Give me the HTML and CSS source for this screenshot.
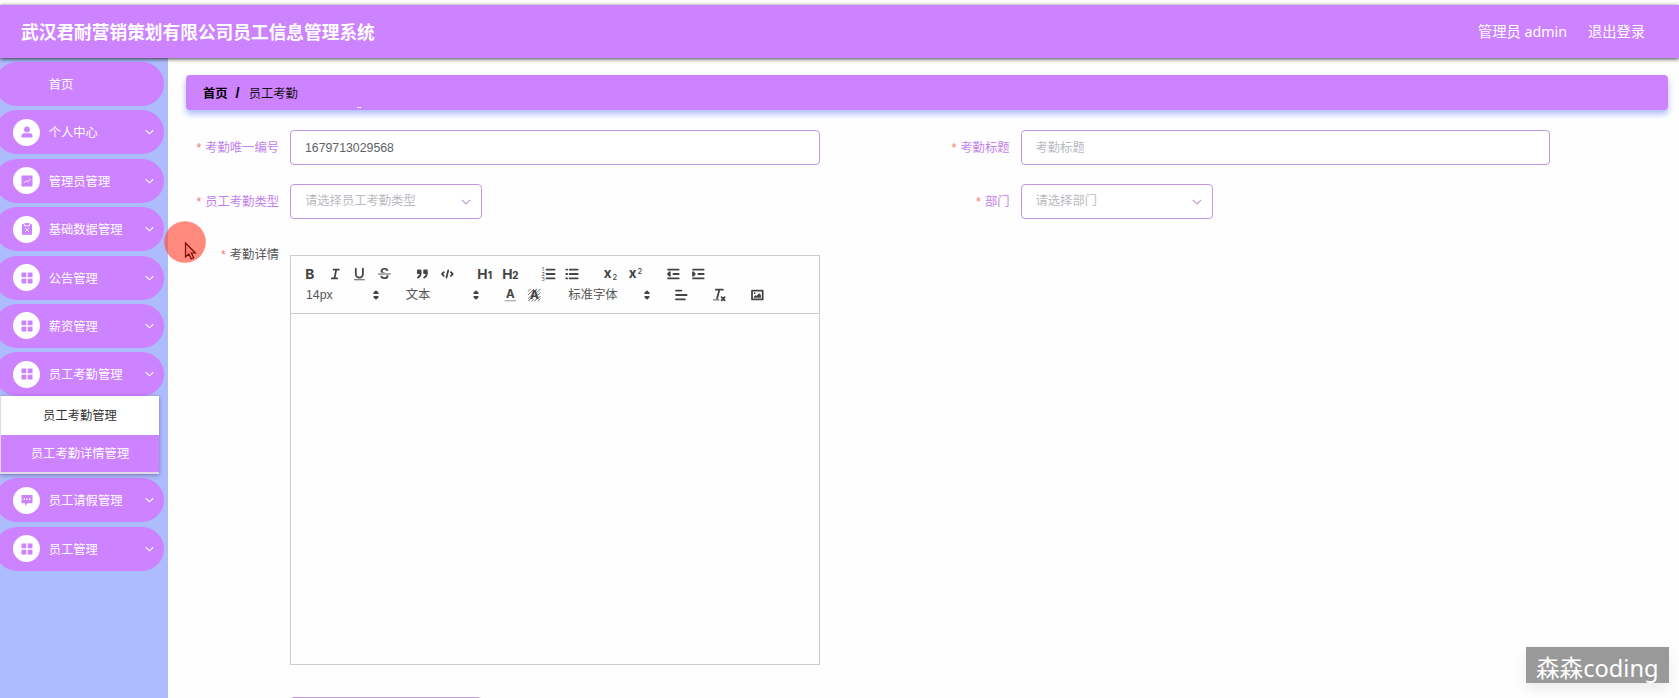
FILE: index.html
```html
<!DOCTYPE html>
<html lang="zh-CN">
<head>
<meta charset="utf-8">
<title>武汉君耐营销策划有限公司员工信息管理系统</title>
<link rel="stylesheet" href="styles.css">
</head>
<body>
<svg class="defs" width="0" height="0">
  <symbol id="chev" viewBox="0 0 10 6"><path d="M.8.8 5 5 9.200.8" fill="none" stroke="currentColor" stroke-width="1.200"/></symbol>
  <symbol id="grid" viewBox="0 0 12 12"><path d="M.5.5h4.800v4.800H.5zM6.700.5h4.800v4.800H6.700zM.5 6.700h4.800v4.800H.5zM6.700 6.700h4.800v4.800H6.700z" fill="currentColor"/></symbol>
  <symbol id="updown" viewBox="0 0 18 18"><path d="M7 11 9 13 11 11ZM7 7 9 5 11 7Z" fill="#444" stroke="#444" stroke-width="2" stroke-linejoin="round"/></symbol>
</svg>
<header class="header">
  <h1 class="title">武汉君耐营销策划有限公司员工信息管理系统</h1>
  <div class="user"><span>管理员 admin</span><span>退出登录</span></div>
</header>
<div class="body">
  <nav class="side">
    <a class="item"><span class="ico none"></span><span class="name">首页</span></a>
    <a class="item"><span class="ico"><svg viewBox="0 0 12 12"><circle cx="6" cy="3.400" r="2.900" fill="currentColor"/><path d="M.5 11.500V10Q.5 7.300 3.200 7.300h5.600Q11.500 7.300 11.500 10v1.500z" fill="currentColor"/></svg></span><span class="name">个人中心</span><svg class="chev"><use href="#chev"/></svg></a>
    <a class="item"><span class="ico"><svg viewBox="0 0 12 12"><path d="M.5.5h11v11H.5z" fill="currentColor"/><path d="M2.700 8 5 5.700 6.500 7 9.300 4" fill="none" stroke="#fff" stroke-width=".9"/></svg></span><span class="name">管理员管理</span><svg class="chev"><use href="#chev"/></svg></a>
    <a class="item"><span class="ico"><svg viewBox="0 0 12 12"><path d="M1 1.200h10v10.600H1z" fill="currentColor"/><path d="M3.500 0h5v2.600h-5z" fill="currentColor"/><path d="M3.500 1.200v1.700h5V1.200M4 5l4 4M8 5 4 9" fill="none" stroke="#fff" stroke-width=".9"/></svg></span><span class="name">基础数据管理</span><svg class="chev"><use href="#chev"/></svg></a>
    <a class="item"><span class="ico"><svg><use href="#grid"/></svg></span><span class="name">公告管理</span><svg class="chev"><use href="#chev"/></svg></a>
    <a class="item"><span class="ico"><svg><use href="#grid"/></svg></span><span class="name">薪资管理</span><svg class="chev"><use href="#chev"/></svg></a>
    <a class="item"><span class="ico"><svg><use href="#grid"/></svg></span><span class="name">员工考勤管理</span><svg class="chev"><use href="#chev"/></svg></a>
    <div class="sub"><a class="on">员工考勤管理</a><a>员工考勤详情管理</a></div>
    <a class="item"><span class="ico"><svg viewBox="0 0 12 12"><path d="M.5 1h11v8.300H6.500L4 11.700V9.300H.5z" fill="currentColor"/><path d="M2.600 4.500h1.400v1.400H2.600zM5.300 4.500h1.400v1.400H5.300zM8 4.500h1.400v1.400H8z" fill="#fff"/></svg></span><span class="name">员工请假管理</span><svg class="chev"><use href="#chev"/></svg></a>
    <a class="item"><span class="ico"><svg><use href="#grid"/></svg></span><span class="name">员工管理</span><svg class="chev"><use href="#chev"/></svg></a>
  </nav>
  <main class="main">
    <div class="crumb"><b>首页</b><b class="slash">/</b><span>员工考勤</span><i class="dash"></i></div>
    <form class="form">
      <div class="field"><label class="label">考勤唯一编号</label><div class="input value">1679713029568</div></div>
      <div class="field"><label class="label">考勤标题</label><div class="input">考勤标题</div></div>
      <div class="field"><label class="label">员工考勤类型</label><div class="input select">请选择员工考勤类型<svg class="arrow"><use href="#chev"/></svg></div></div>
      <div class="field"><label class="label">部门</label><div class="input select">请选择部门<svg class="arrow"><use href="#chev"/></svg></div></div>
      <div class="field wide"><label class="label dark">考勤详情</label>
        <div class="editor">
          <div class="toolbar">
            <div class="row">
              <div class="group">
                <svg class="btn" viewBox="0 0 18 18"><text x="3.400" y="14.600" font-size="15.500" font-weight="700">B</text></svg>
                <svg class="btn" viewBox="0 0 18 18"><g class="st"><path d="M7 4h6M5 14h6M8 14l2-10"/></g></svg>
                <svg class="btn" viewBox="0 0 18 18"><g class="st"><path d="M5 3v6a4 4 0 0 0 8 0V3"/></g><rect x="3" y="15" width="12" height="1"/></svg>
                <svg class="btn" viewBox="0 0 18 18"><text x="9" y="14.700" font-size="16" font-weight="600" text-anchor="middle">S</text><path class="cut" d="M1.500 9h15"/><path class="thin" d="M1.800 9h14.400"/></svg>
              </div>
              <div class="group">
                <svg class="btn" viewBox="0 0 18 18"><g class="st"><path class="fl" d="M4 5h3v3H4zM11 5h3v3h-3z"/><path d="M7 8c0 4.031-3 5-3 5M14 8c0 4.031-3 5-3 5"/></g></svg>
                <svg class="btn" viewBox="0 0 18 18"><g class="st"><path d="M5 7 3 9l2 2M13 7l2 2-2 2M10 5 8 13"/></g></svg>
              </div>
              <div class="group">
                <svg class="btn" viewBox="0 0 18 18"><text x="0" y="14.500" font-size="15.500" font-weight="700">H</text><text x="11.600" y="14.700" font-size="11" font-weight="800">1</text></svg>
                <svg class="btn" viewBox="0 0 18 18"><text x="0" y="14.500" font-size="15.500" font-weight="700">H</text><text x="11.200" y="14.700" font-size="11" font-weight="800">2</text></svg>
              </div>
              <div class="group">
                <svg class="btn" viewBox="0 0 18 18"><g class="st"><path d="M7 4h9M7 9h9M7 14h9"/></g><text x="1.500" y="6" font-size="6">1</text><text x="1.200" y="11.200" font-size="6">2</text><text x="1.200" y="16.400" font-size="6">3</text></svg>
                <svg class="btn" viewBox="0 0 18 18"><g class="st"><path d="M6 4h9M6 9h9M6 14h9M2.200 4h1M2.200 9h1M2.200 14h1"/></g></svg>
              </div>
              <div class="group">
                <svg class="btn" viewBox="0 0 18 18"><text x="1.600" y="14" font-size="15" font-weight="700">x</text><text x="11.500" y="16" font-size="8.500" font-weight="500">2</text></svg>
                <svg class="btn" viewBox="0 0 18 18"><text x="1.600" y="14" font-size="15" font-weight="700">x</text><text x="11.500" y="8.500" font-size="8.500" font-weight="500">2</text></svg>
              </div>
              <div class="group">
                <svg class="btn" viewBox="0 0 18 18"><g class="st"><path d="M3 14h12M3 4h12M9 9h6"/><path class="fl" d="M5 7v4L3 9z"/></g></svg>
                <svg class="btn" viewBox="0 0 18 18"><g class="st"><path d="M3 14h12M3 4h12M9 9h6"/><path class="fl" d="M3 7v4l2-2z"/></g></svg>
              </div>
            </div>
            <div class="row">
              <div class="group"><span class="pick">14px<svg><use href="#updown"/></svg></span></div>
              <div class="group"><span class="pick">文本<svg><use href="#updown"/></svg></span></div>
              <div class="group">
                <svg class="btn" viewBox="0 0 18 18"><text x="9" y="12.200" font-size="13" font-weight="700" text-anchor="middle">A</text><path class="hair" d="M2.500 15.500h13"/></svg>
                <svg class="btn" viewBox="0 0 18 18"><path class="hatch" d="M2 5 5 2M2 9 9 2M2 13 6 9M2 16 6 12M9 5 12 2M12 6 16 2M13 9 16 6M13 13 16 10M6 16 8 14M9 16 12 13M13 16 16 13"/><text x="9" y="14" font-size="13" font-weight="800" text-anchor="middle">A</text></svg>
              </div>
              <div class="group"><span class="pick font">标准字体<svg><use href="#updown"/></svg></span></div>
              <div class="group"><svg class="btn" viewBox="0 0 18 18"><g class="st"><path d="M3 9h12M3 14h10M3 4h6"/></g></svg></div>
              <div class="group"><svg class="btn" viewBox="0 0 18 18"><g class="st"><path d="M5 3h8M6.500 13 9 3M11.500 11.500l3.500 3.500M15 11.500 11.500 15"/></g><rect x="2" y="14" width="7" height="1"/></svg></div>
              <div class="group"><svg class="btn" viewBox="0 0 18 18"><g class="st"><path d="M3 4h12v10H3z"/></g><circle cx="6" cy="7" r="1"/><path d="M5 12v-1l2-2 1 1 3-3 2 2v3z" fill="#444"/></svg></div>
            </div>
          </div>
          <div class="area"></div>
        </div>
      </div>
      <div class="field last"><div class="input select"></div></div>
    </form>
  </main>
</div>
<svg class="pointer" viewBox="0 0 42 42"><circle cx="21" cy="21" r="20.800" fill="#ff4c38" fill-opacity=".66"/><path d="M21.500 22v14l3.300-3 2.400 5 2.500-1.200-2.300-4.800h4z" fill="#ff7868" stroke="#720e0c" stroke-width="1.200"/></svg>
<div class="mark">森森coding</div>
</body>
</html>
```
FILE: styles.css
```css
* { box-sizing: border-box; }
body {
  margin: 0;
  padding-top: 5px;
  height: 698px;
  overflow: hidden;
  display: flex;
  flex-direction: column;
  background: #fefefe;
  font: 12.3px "Liberation Sans", "Noto Sans CJK SC", sans-serif;
}
.defs { position: absolute; }
.header {
  flex: none;
  height: 53px;
  padding: 0 34px 0 21px;
  display: flex;
  align-items: center;
  justify-content: space-between;
  background: #cd82ff;
  color: #fff;
  box-shadow: 0 1px 4px rgba(0, 0, 0, .75);
  z-index: 1;
}
.title { margin: 0; padding-top: 3px; font-size: 17.7px; line-height: 50px; font-weight: 700; }
.user { display: flex; gap: 21px; padding-bottom: 2px; font: 14.25px "Noto Sans", "Noto Sans CJK SC", sans-serif; }
.body { flex: 1; min-height: 0; display: flex; }
.side {
  width: 168px;
  flex: none;
  padding-top: 4px;
  background: #adbcfc;
  display: flex;
  flex-direction: column;
  gap: 4.400px;
}
.item {
  flex: none;
  width: 168.500px;
  height: 44px;
  margin-left: -5px;
  padding: 0 10px 0 18px;
  border-radius: 22px;
  background: #cd82ff;
  color: #fff;
  display: flex;
  align-items: center;
}
.ico {
  width: 27px;
  height: 27px;
  border-radius: 50%;
  background: #fff;
  color: #cd82ff;
  display: flex;
  align-items: center;
  justify-content: center;
}
.ico svg { width: 12px; height: 12px; }
.none { background: none; }
.name { flex: 1; margin-left: 8.700px; }
.chev { width: 9px; height: 6px; }
.sub {
  flex: none;
  width: 159px;
  height: 78px;
  margin-top: -4.400px;
  margin-bottom: -.600px;
  border: solid #e2d8ee;
  border-width: 0 0 2px 1px;
  background: #cd82ff;
  box-shadow: 0 1px 4px rgba(60, 40, 90, .5);
  text-align: center;
  z-index: 1;
}
.sub a { display: block; height: 37px; line-height: 39px; color: #fff; }
.sub .on { height: 39px; line-height: 41px; background: #fff; color: #333; }
.main { flex: 1; padding: 17px 11px 0 17.500px; }
.crumb {
  height: 35px;
  padding-left: 17.500px;
  border-radius: 4px;
  background: #cd82ff;
  box-shadow: 0 4px 6px #adbcfc;
  color: #111;
  display: flex;
  align-items: center;
}
.crumb b { color: #000; }
.crumb .slash { margin: 0 9px 0 8px; font-size: 14.500px; }
.dash { width: 4px; height: 1px; margin: 30px 0 0 59.500px; background: #fff; }
.form {
  margin-top: 20px;
  display: grid;
  grid-template-columns: 730.500px 730.500px;
  row-gap: 19px;
}
.field { display: flex; height: 35px; }
.label {
  width: 93.500px;
  margin-right: 11px;
  line-height: 37px;
  text-align: right;
  color: #c182ec;
}
.label::before { content: "*"; margin-right: 4px; color: #f07878; }
.dark { color: #555; line-height: 35px; }
.input {
  width: 529.500px;
  height: 35px;
  padding: 0 14px;
  line-height: 35px;
  border: 1px solid #c495e2;
  border-radius: 4px;
  background: #fff;
  color: #b9bac0;
}
.value { color: #606266; }
.select { width: 192px; display: flex; align-items: center; justify-content: space-between; padding-right: 10px; }
.arrow { width: 10px; height: 6px; color: #c09adb; }
.wide { height: 424px; }
.editor { width: 529.500px; height: 410px; margin-top: 17px; border: 1px solid #ccc; }
.toolbar { height: 58px; padding: 7px 7px 0; border-bottom: 1px solid #ccc; }
.row { display: flex; gap: 13.400px; height: 21px; align-items: center; }
.group { display: flex; }
.btn { width: 24.700px; height: 16px; fill: #444; font-family: Inter, sans-serif; }
.st { fill: none; stroke: #444; stroke-width: 2; stroke-linecap: round; stroke-linejoin: round; }
.fl { fill: #444; }
.thin { stroke: #444; stroke-width: 1; }
.cut { stroke: #fefefe; stroke-width: 3; }
.hair { stroke: #888; stroke-width: 1; }
.hatch { stroke: #555; stroke-width: 1; fill: none; }
.pick {
  width: 86.400px;
  padding-left: 8px;
  display: flex;
  align-items: center;
  justify-content: space-between;
  color: #555;
  line-height: 20px;
}
.pick svg { width: 16px; height: 16px; }
.font { width: 95px; }
.last { grid-column: 1; padding-left: 104.500px; margin-top: 16px; }
.pointer { position: absolute; left: 164px; top: 221px; width: 42px; height: 42px; z-index: 2; }
.mark {
  position: absolute;
  left: 1526px;
  top: 647px;
  width: 143px;
  height: 36px;
  padding-left: 10px;
  background: #999;
  color: #fff;
  box-shadow: 0 6px 14px rgba(0, 0, 0, .08);
  font: 23.6px/42px "Noto Sans", "Noto Sans CJK SC", sans-serif;
  white-space: nowrap;
}
```
